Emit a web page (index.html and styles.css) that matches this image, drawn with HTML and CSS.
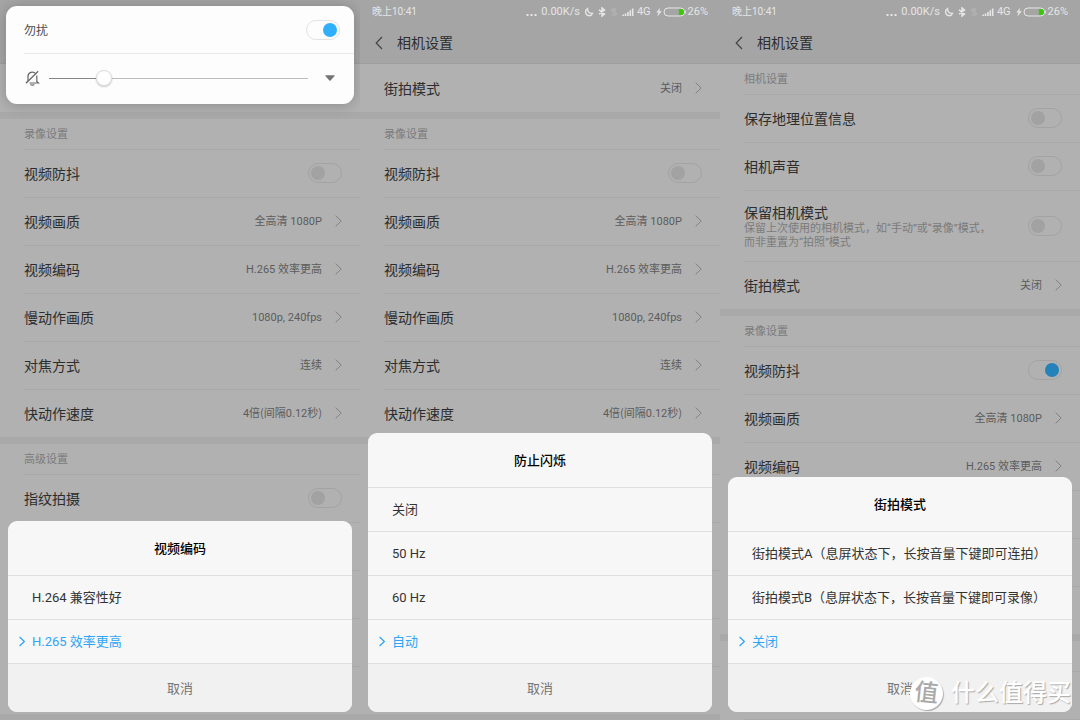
FILE: index.html
```html
<!DOCTYPE html>
<html lang="zh-CN">
<head>
<meta charset="utf-8">
<title>相机设置</title>
<link rel="stylesheet" href="styles.css">
</head>
<body>
<svg class="sprite" aria-hidden="true">
  <symbol id="chevron" viewBox="0 0 7 12"><path d="M.7.7 6.2 6 .7 11.3" fill="none" stroke="currentColor"/></symbol>
  <symbol id="back" viewBox="0 0 8 14"><path d="M7 1 1.200 7 7 13" fill="none" stroke="currentColor" stroke-width="1.2"/></symbol>
  <symbol id="dots" viewBox="0 0 11 10"><path d="M.5 7h2v2h-2zM4.500 7h2v2h-2zM8.500 7h2v2h-2z" fill="currentColor"/></symbol>
  <symbol id="moon" viewBox="0 0 10 10"><path d="M3.600 1.500C3.200 4.800 5.400 6.700 8.600 6.300 7.800 8.200 6.300 8.900 4.900 8.700 1.300 8.200.2 3.500 3.600 1.500Z" fill="none" stroke="currentColor" stroke-width="1.300"/></symbol>
  <symbol id="bluetooth" viewBox="0 0 8 10"><path d="M1 2.900 6.500 7.100 4 9V1L6.500 2.900 1 7.100" fill="none" stroke="currentColor" stroke-width="1.500"/></symbol>
  <symbol id="transfer" viewBox="0 0 8 10"><path d="M3 9V1.500L.8 4M5 1v7.500L7.200 6" fill="none" stroke="currentColor"/></symbol>
  <symbol id="signal" viewBox="0 0 12 10"><path d="M.3 7.500h1.600V9H.3zM2.700 6.500h1.600V9H2.700zM5.100 5h1.600v4H5.100zM7.500 3.300h1.600V9H7.500zM9.900 1.500h1.600V9H9.900z" fill="currentColor"/></symbol>
  <symbol id="battery" viewBox="0 0 30 10"><path d="M4 .8.4 5.600h2L1.400 9.600 5.800 4.300H3.400Z" fill="currentColor"/><rect x="8" y="1" width="20.500" height="8" rx="4" fill="none" stroke="currentColor"/><path d="M29 3.500h.8v3H29z" fill="currentColor"/><path d="M22.800 2h2.200a3 3 0 0 1 0 6h-2.200z" fill="#3cc40a"/></symbol>
</svg>

<main class="screens">
  <section class="phone">
    <header class="bar"></header>
    <div class="group">
      <div class="row"></div>
    </div>
    <div class="group">
      <h2 class="section">录像设置</h2>
      <label class="row"><span class="name">视频防抖</span><input class="switch" type="checkbox"></label>
      <button class="row"><span class="name">视频画质</span><span class="value">全高清 1080P</span><svg class="chevron"><use href="#chevron"/></svg></button>
      <button class="row"><span class="name">视频编码</span><span class="value">H.265 效率更高</span><svg class="chevron"><use href="#chevron"/></svg></button>
      <button class="row"><span class="name">慢动作画质</span><span class="value">1080p, 240fps</span><svg class="chevron"><use href="#chevron"/></svg></button>
      <button class="row"><span class="name">对焦方式</span><span class="value">连续</span><svg class="chevron"><use href="#chevron"/></svg></button>
      <button class="row"><span class="name">快动作速度</span><span class="value">4倍（间隔0.12秒）</span><svg class="chevron"><use href="#chevron"/></svg></button>
    </div>
    <div class="group">
      <h2 class="section">高级设置</h2>
      <label class="row"><span class="name">指纹拍摄</span><input class="switch" type="checkbox"></label>
      <div class="row"></div>
      <div class="row"></div>
      <div class="row"></div>
      <div class="row"></div>
    </div>
    <div class="group"></div>

    <div class="volume">
      <label class="volume-top"><span>勿扰</span><input class="switch bright" type="checkbox" checked></label>
      <div class="volume-bottom">
        <svg class="bell" viewBox="0 0 15 16"><path d="M3 11V6.500a4.300 4.300 0 0 1 7.600-2.800M11.800 5.500V11.500l1.700 1.500H4.500M5.400 14.500q2 1.200 4 0M1 13.200 13.200 1.200M3 11 1 13" fill="none" stroke="#666" stroke-width="1.200"/></svg>
        <input class="slider" type="range" min="0" max="200" value="39" aria-label="音量">
        <button class="expand" aria-label="展开"><svg viewBox="0 0 10 6"><path d="M.6.300h8.800q.6.300 0 .9L5.600 5.400q-.6.500-1.200 0L.6 1.200Q0 .6.600.3Z" fill="#757575"/></svg></button>
      </div>
    </div>

    <div class="sheet" role="dialog" aria-label="视频编码">
      <h3 class="sheet-title">视频编码</h3>
      <button class="option">H.264 兼容性好</button>
      <button class="option selected"><svg class="mark"><use href="#chevron"/></svg>H.265 效率更高</button>
      <button class="cancel">取消</button>
    </div>
  </section>

  <section class="phone">
    <header class="bar">
      <div class="status"><span class="clock">晚上10:41</span>
        <svg class="dots"><use href="#dots"/></svg><span class="speed">0.00K/s</span><svg class="moon"><use href="#moon"/></svg><svg class="bluetooth"><use href="#bluetooth"/></svg><svg class="transfer"><use href="#transfer"/></svg><svg class="signal"><use href="#signal"/></svg><span class="network">4G</span><svg class="battery"><use href="#battery"/></svg><span>26%</span>
      </div>
      <div class="heading"><button class="back" aria-label="返回"><svg><use href="#back"/></svg></button><h1>相机设置</h1></div>
    </header>
    <div class="group">
      <button class="row"><span class="name">街拍模式</span><span class="value">关闭</span><svg class="chevron"><use href="#chevron"/></svg></button>
    </div>
    <div class="group">
      <h2 class="section">录像设置</h2>
      <label class="row"><span class="name">视频防抖</span><input class="switch" type="checkbox"></label>
      <button class="row"><span class="name">视频画质</span><span class="value">全高清 1080P</span><svg class="chevron"><use href="#chevron"/></svg></button>
      <button class="row"><span class="name">视频编码</span><span class="value">H.265 效率更高</span><svg class="chevron"><use href="#chevron"/></svg></button>
      <button class="row"><span class="name">慢动作画质</span><span class="value">1080p, 240fps</span><svg class="chevron"><use href="#chevron"/></svg></button>
      <button class="row"><span class="name">对焦方式</span><span class="value">连续</span><svg class="chevron"><use href="#chevron"/></svg></button>
      <button class="row"><span class="name">快动作速度</span><span class="value">4倍（间隔0.12秒）</span><svg class="chevron"><use href="#chevron"/></svg></button>
    </div>
    <div class="group">
      <div class="section"></div>
      <div class="row"></div>
      <div class="row"></div>
      <div class="row"></div>
      <div class="row"></div>
      <div class="row"></div>
    </div>
    <div class="group"></div>

    <div class="sheet" role="dialog" aria-label="防止闪烁">
      <h3 class="sheet-title">防止闪烁</h3>
      <button class="option">关闭</button>
      <button class="option">50 Hz</button>
      <button class="option">60 Hz</button>
      <button class="option selected"><svg class="mark"><use href="#chevron"/></svg>自动</button>
      <button class="cancel">取消</button>
    </div>
  </section>

  <section class="phone">
    <header class="bar">
      <div class="status"><span class="clock">晚上10:41</span>
        <svg class="dots"><use href="#dots"/></svg><span class="speed">0.00K/s</span><svg class="moon"><use href="#moon"/></svg><svg class="bluetooth"><use href="#bluetooth"/></svg><svg class="transfer"><use href="#transfer"/></svg><svg class="signal"><use href="#signal"/></svg><span class="network">4G</span><svg class="battery"><use href="#battery"/></svg><span>26%</span>
      </div>
      <div class="heading"><button class="back" aria-label="返回"><svg><use href="#back"/></svg></button><h1>相机设置</h1></div>
    </header>
    <div class="group">
      <h2 class="section">相机设置</h2>
      <label class="row"><span class="name">保存地理位置信息</span><input class="switch" type="checkbox"></label>
      <label class="row"><span class="name">相机声音</span><input class="switch" type="checkbox"></label>
      <label class="row tall"><span class="name">保留相机模式<small>保留上次使用的相机模式，如“手动”或“录像”模式，<br>而非重置为“拍照”模式</small></span><input class="switch" type="checkbox"></label>
      <button class="row"><span class="name">街拍模式</span><span class="value">关闭</span><svg class="chevron"><use href="#chevron"/></svg></button>
    </div>
    <div class="group">
      <h2 class="section">录像设置</h2>
      <label class="row"><span class="name">视频防抖</span><input class="switch" type="checkbox" checked></label>
      <button class="row"><span class="name">视频画质</span><span class="value">全高清 1080P</span><svg class="chevron"><use href="#chevron"/></svg></button>
      <button class="row"><span class="name">视频编码</span><span class="value">H.265 效率更高</span><svg class="chevron"><use href="#chevron"/></svg></button>
      <div class="row"></div>
      <div class="row"></div>
      <div class="row"></div>
    </div>
    <div class="group">
      <div class="section"></div>
      <div class="row"></div>
      <div class="row"></div>
    </div>

    <div class="sheet" role="dialog" aria-label="街拍模式">
      <h3 class="sheet-title">街拍模式</h3>
      <button class="option">街拍模式A（息屏状态下，长按音量下键即可连拍）</button>
      <button class="option">街拍模式B（息屏状态下，长按音量下键即可录像）</button>
      <button class="option selected"><svg class="mark"><use href="#chevron"/></svg>关闭</button>
      <button class="cancel">取消</button>
    </div>
    <div class="watermark"><span class="seal">值</span><span>什么值得买</span></div>
  </section>
</main>
</body>
</html>
```
FILE: styles.css
```css
* { box-sizing: border-box; }
body { margin: 0; background: #b1b1b1; color: #2d2d2d; font-family: Roboto, "Noto Sans CJK SC", sans-serif; }
button { margin: 0; padding: 0; border: 0; background: none; color: inherit; font: inherit; text-align: left; }
h1, h2, h3 { margin: 0; font-weight: 400; }
svg { display: block; flex: none; }
.sprite { position: absolute; width: 0; height: 0; }

.screens { display: grid; grid-template-columns: repeat(3, 1fr); height: 100vh; }
.phone { position: relative; min-width: 0; overflow: hidden; background: #b1b1b1; }

.bar { height: 64px; background: #a5a5a5; border-bottom: 1px solid #9e9e9e; }
.status { display: flex; align-items: center; height: 23px; padding: 0 12px; color: #e6e6e6; font-size: 11px; line-height: 24px; }
.clock { margin-right: auto; font-size: 10px; }
.status svg { height: 10px; }
.dots { width: 11px; }
.speed { margin: 0 4px; }
.moon { width: 10px; }
.bluetooth { width: 8px; margin-left: 4px; }
.transfer { width: 8px; margin: 0 4px; opacity: .3; }
.signal { width: 12px; }
.network { margin: 0 5px 0 3px; }
.battery { width: 30px; margin-right: 2px; }
.heading { display: flex; align-items: center; height: 40px; padding-left: 15px; }
.heading h1 { font-size: 14px; line-height: 20px; }
.back { width: 22px; color: #444; }
.back svg { width: 8px; height: 14px; }

.group + .group { border-top: 7px solid #a9a9a9; }
.section { height: 30px; margin-left: 24px; color: #7b7b7b; font-size: 11px; line-height: 31px; }
.row { display: flex; align-items: center; width: calc(100% - 24px); height: 48px; margin-left: 24px; padding: 0 18px 1px 0; border-top: 1px solid #a9a9a9; }
.row:first-child { border-top-color: transparent; }
.tall { height: 71px; }
.name { flex: 1; padding-top: 2px; font-size: 14px; line-height: 18px; }
.name small { display: block; color: #7b7b7b; font-size: 11px; line-height: 14px; }
.value { padding-top: 2px; color: #5c5c5c; font-size: 11px; line-height: 16px; font-variant-east-asian: proportional-width; }
.chevron { width: 7px; height: 12px; margin-left: 13px; color: #808080; }

.switch { appearance: none; display: flex; flex: none; width: 34px; height: 20px; margin: 0; padding: 2px; border: 1px solid #a3a3a3; border-radius: 10px; }
.switch::before { content: ""; width: 14px; height: 14px; border-radius: 50%; background: #a2a2a2; }
.switch:checked { justify-content: flex-end; }
.switch:checked::before { background: #2581b9; }
.switch.bright { border-color: #e3e3e3; }
.switch.bright:checked::before { background: #30b0fb; }

.volume { position: absolute; top: 6px; left: 6px; right: 6px; height: 98px; border-radius: 11px; background: #fdfdfd; box-shadow: 0 1px 14px rgba(0, 0, 0, .22); }
.volume-top { display: flex; align-items: center; justify-content: space-between; height: 48px; margin-left: 18px; padding-right: 14px; border-bottom: 1px solid #e9e9e9; color: #4c4c4c; font-size: 12px; }
.volume-bottom { display: flex; align-items: center; height: 50px; padding: 0 19px 2px 19px; }
.bell { width: 15px; height: 16px; }
.slider { appearance: none; flex: 1; min-width: 0; height: 20px; margin: 0 17px 0 9px; background: none; }
.slider::-webkit-slider-runnable-track { height: 1px; background: linear-gradient(to right, #858585 20%, #bdbdbd 20%); }
.slider::-webkit-slider-thumb { appearance: none; width: 16px; height: 16px; margin-top: -8px; border: 1px solid #dedede; border-radius: 50%; background: #fff; box-shadow: 0 1px 2px rgba(0, 0, 0, .2); }
.expand svg { width: 10px; height: 6px; }

.sheet { position: absolute; left: 8px; right: 8px; bottom: 8px; overflow: hidden; border-radius: 9px; background: #f7f7f7; }
.sheet-title { height: 55px; border-bottom: 1px solid #dfdfdf; color: #000; font-size: 13px; font-weight: 500; line-height: 55px; text-align: center; }
.option { position: relative; display: block; width: 100%; height: 44px; padding-left: 24px; border-bottom: 1px solid #dfdfdf; color: #333; font-size: 13px; line-height: 44px; white-space: nowrap; }
.selected { color: #30a5f5; }
.mark { position: absolute; top: 16px; left: 11px; width: 6px; height: 11px; stroke-width: 1.5; }
.cancel { display: block; width: 100%; height: 48px; background: #f1f1f1; color: #757575; font-size: 13px; line-height: 49px; text-align: center; }

.watermark { position: absolute; right: 9px; bottom: 10px; display: flex; align-items: center; gap: 8px; color: #fff; font-size: 24px; font-weight: 500; line-height: 34px; text-shadow: 1px 1px 1px #aaa; }
.seal { width: 33px; height: 33px; border-radius: 50%; background: #fff; box-shadow: 1px 1px 1px #aaa; color: #aaa; font-size: 24px; line-height: 32px; text-align: center; text-shadow: none; transform: rotate(6deg); }
```
